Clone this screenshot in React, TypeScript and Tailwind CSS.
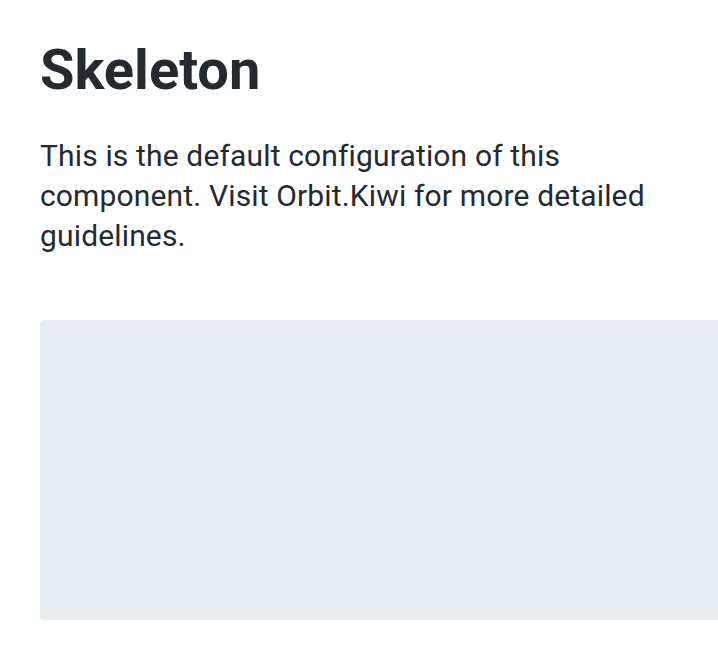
import React from 'react';

export default function App() {
  return (
    <div className="w-[718px] h-[670px] overflow-hidden bg-white font-['Roboto',sans-serif] text-[#252a31]">
      <div className="pl-10 pt-[38px] w-[760px]">
        <h1 className="text-[56px] leading-[64px] font-bold">Skeleton</h1>
        <p className="mt-[34px] w-[620px] text-[30px] leading-[40px] tracking-[0.15px]">
          This is the default configuration of this component. Visit Orbit.Kiwi for more detailed guidelines.
        </p>
        <div className="mt-16 h-[300px] w-[720px] rounded bg-[#e8edf1]" />
      </div>
    </div>
  );
}
